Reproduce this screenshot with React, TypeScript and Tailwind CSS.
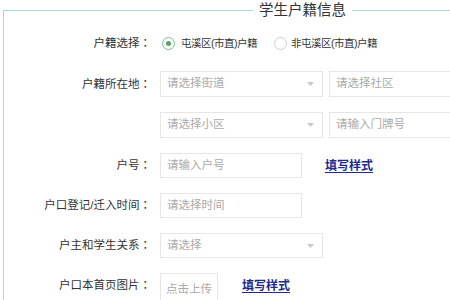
import React from 'react'

const font = { fontFamily: '"Liberation Sans", "Noto Sans CJK SC", sans-serif' }
const colonFont = { fontFamily: '"Noto Sans CJK TC", sans-serif' }

function Label({ children }: { children?: React.ReactNode }) {
  return (
    <div className="w-[147px] shrink-0 text-right text-[11.5px] text-[#333]">
      {children && (
        <>
          {children}
          <span style={colonFont}>：</span>
        </>
      )}
    </div>
  )
}

function Caret() {
  return (
    <svg width="7" height="4" viewBox="0 0 7 4" className="absolute right-[8px] top-1/2 -translate-y-1/2">
      <path d="M0 0 L7 0 L3.5 4 Z" fill="#c8c8c8" />
    </svg>
  )
}

function Field({ w, text, select }: { w: string; text: string; select?: boolean }) {
  return (
    <div className={`relative flex h-full shrink-0 items-center border border-[#e6e6e6] bg-white pl-[6px] text-[11.5px] text-[#aaa] ${w}`}>
      {text}
      {select && <Caret />}
    </div>
  )
}

function Link() {
  return <span className="text-[12px] font-bold text-[#1f2a8c] underline underline-offset-2">填写样式</span>
}

export default function App() {
  return (
    <div className="h-[300px] w-[450px] overflow-hidden bg-white" style={font}>
      <fieldset className="ml-[3px] w-[620px] border border-[#a9d8df] pb-4">
        <legend className="ml-[249px] px-[6px] text-[14.5px] leading-[20px] text-[#333]">学生户籍信息</legend>
        <div className="flex flex-col gap-[15px] pt-[11px]">
          <div className="flex h-[25px] items-center">
            <Label>户籍选择</Label>
            <div className="ml-[11px] flex items-center text-[10.5px] tracking-[-0.5px] text-[#333]">
              <span className="flex h-[13px] w-[13px] shrink-0 items-center justify-center rounded-full border border-[#7cc08f]">
                <span className="h-[5px] w-[5px] rounded-full bg-[#4fa96b]" />
              </span>
              <span className="ml-[6px] whitespace-nowrap">屯溪区(市直)户籍</span>
              <span className="ml-[17px] h-[13px] w-[13px] shrink-0 rounded-full border border-[#cfcfcf]" />
              <span className="ml-[4px] whitespace-nowrap">非屯溪区(市直)户籍</span>
            </div>
          </div>
          <div className="flex h-[26px] items-center">
            <Label>户籍所在地</Label>
            <div className="ml-[9px] flex h-full gap-[6px]">
              <Field w="w-[163px]" text="请选择街道" select />
              <Field w="w-[163px]" text="请选择社区" />
            </div>
          </div>
          <div className="flex h-[26px] items-center">
            <Label />
            <div className="ml-[9px] flex h-full gap-[6px]">
              <Field w="w-[163px]" text="请选择小区" select />
              <Field w="w-[163px]" text="请输入门牌号" />
            </div>
          </div>
          <div className="flex h-[25px] items-center">
            <Label>户号</Label>
            <div className="ml-[9px] flex h-full items-center gap-[23px]">
              <Field w="w-[142px]" text="请输入户号" />
              <Link />
            </div>
          </div>
          <div className="flex h-[25px] items-center">
            <Label>户口登记/迁入时间</Label>
            <div className="ml-[9px] flex h-full">
              <Field w="w-[142px]" text="请选择时间" />
            </div>
          </div>
          <div className="flex h-[25px] items-center">
            <Label>户主和学生关系</Label>
            <div className="ml-[9px] flex h-full">
              <Field w="w-[163px]" text="请选择" select />
            </div>
          </div>
          <div className="flex h-[25px] items-center">
            <Label>户口本首页图片</Label>
            <div className="ml-[9px] flex h-full items-center gap-[24px]">
              <div className="flex h-[34px] w-[58px] shrink-0 items-center justify-center self-start border border-[#e6e6e6] text-[11.5px] text-[#aaa]">
                点击上传
              </div>
              <Link />
            </div>
          </div>
        </div>
      </fieldset>
    </div>
  )
}
